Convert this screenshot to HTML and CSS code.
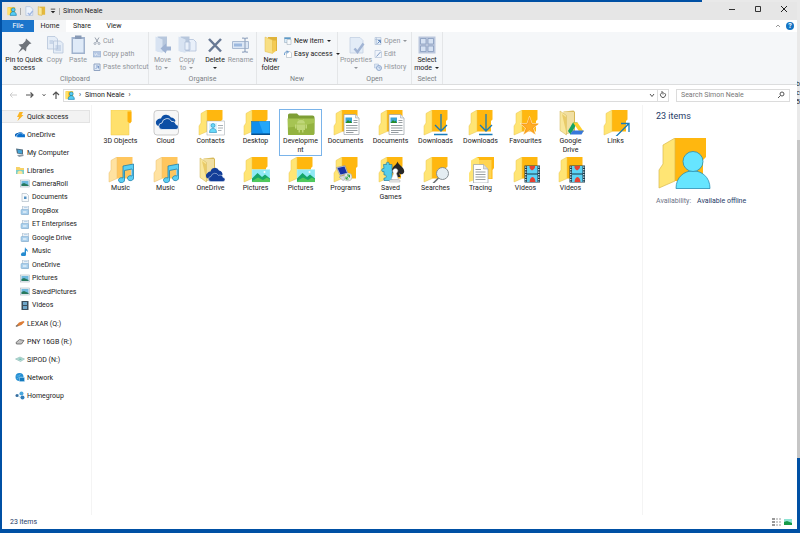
FILE: index.html
```html
<!DOCTYPE html>
<html lang="en">
<head>
<meta charset="utf-8">
<title>Simon Neale</title>
<link rel="stylesheet" href="styles.css">
</head>
<body>
<svg class="defs" aria-hidden="true">
  <symbol id="folder" viewBox="-4 0 56 52" overflow="visible">
    <path d="M16 0H47V19L44 22V43H16Z" fill="#ffb70f"/>
    <path d="M16 0L4 7V26L0 32V50L16 43Z" fill="#ffe574" stroke="#e8c54e" stroke-width="1"/>
  </symbol>
  <symbol id="f-3d" viewBox="-4 0 56 52">
    <path d="M4 0H44V24H40V50H4Z" fill="#ffe06c" stroke="#ecc84c"/>
    <path d="M37 3h8v20l-3 4-5-4z" fill="#ffb10a"/>
  </symbol>
  <symbol id="f-cloud" viewBox="-4 0 56 52">
    <rect x="0" y="1" width="49" height="49" rx="6" fill="#f7f7f7" stroke="#b9b9b9" stroke-width="1.5"/>
    <path d="M9 32a7 7 0 0 1-3-12 8 8 0 0 1 8-3 11 11 0 0 1 20-2 10 10 0 0 1 9 7l-10 10z" fill="#0d4fa5"/>
    <path d="M16 39a6 6 0 0 1 0-13 10 10 0 0 1 19-3 8 8 0 0 1 9 6 5 5 0 0 1 0 10z" fill="#0d4fa5" stroke="#fff" stroke-width="1.5"/>
  </symbol>
  <symbol id="f-contacts" viewBox="-4 0 56 52">
    <use href="#folder" x="-4" y="0" width="56" height="52"/>
    <rect x="16" y="22" width="35" height="28" fill="#fff" stroke="#9aa3aa"/>
    <rect x="20" y="26" width="16" height="20" fill="#d9f4ff"/>
    <circle cx="28" cy="31" r="4" fill="#66d9fa" stroke="#1679ac"/>
    <path d="M21 45c0-11 14-11 14 0z" fill="#66d9fa" stroke="#1679ac"/>
    <path d="M38 31h10M38 36h10M38 41h7" stroke="#8b959c" stroke-width="1.5"/>
  </symbol>
  <symbol id="f-desktop" viewBox="-4 0 56 52">
    <use href="#folder" x="-4" y="0" width="56" height="52"/>
    <rect x="15" y="23" width="37" height="26" fill="#108fee" stroke="#0869b4"/>
    <path d="M30 23h21v23H38z" fill="#24a7fa"/><path d="M15 47h37v3H15z" fill="#07508e"/>
  </symbol>
  <symbol id="f-dev" viewBox="-4 0 56 52">
    <path d="M-2 10q0-3 3-3h15l4 4h27q4 0 4 4v32q0 2-2 2H0q-2 0-2-2z" fill="#7e9e35"/>
    <path d="M-3 17h54l-1 31q0 2-2 2H0q-2 0-2-2z" fill="#a6c453"/>
    <path d="M-2 35q27-2 52-9v21q0 3-2 3H0q-2 0-2-3z" fill="#94b340"/>
    <g fill="#bfd678"><path d="M16 27a8 7 0 0 1 16 0zM16 29h16v11H16zM12 29h3v8h-3zM33 29h3v8h-3zM19 40h3v5h-3zM26 40h3v5h-3z"/><path d="M18 18l3 4M30 18l-3 4" stroke="#bfd678"/></g>
  </symbol>
  <symbol id="f-documents" viewBox="-4 0 56 52">
    <use href="#folder" x="-4" y="0" width="56" height="52"/>
    <path d="M20 9h23l7 7v33H20z" fill="#fff" stroke="#929ba0" stroke-width="1.3"/>
    <path d="M43 9v7h7" fill="#e7ebee" stroke="#929ba0"/>
    <rect x="23" y="15" width="13" height="11" fill="#3ba4d6"/><path d="M23 26l5-6 3 3 2-2 3 5z" fill="#268c28"/>
    <path d="M39 21h8M39 25h8M24 31h23M24 36h23M24 41h23M24 45h15" stroke="#838b90" stroke-width="1.7"/>
  </symbol>
  <symbol id="f-downloads" viewBox="-4 0 56 52">
    <use href="#folder" x="-4" y="0" width="56" height="52"/>
    <path d="M34 8v34M22 30l12 12 12-12M20 49h27" fill="none" stroke="#187bb9" stroke-width="2.6"/>
  </symbol>
  <symbol id="f-favourites" viewBox="-4 0 56 52">
    <use href="#folder" x="-4" y="0" width="56" height="52"/>
    <path d="M31 13l5 14h14L39 36l4 13-12-8-12 8 4-13-11-9h14z" fill="#ffad22" stroke="#fff1c5" stroke-width="1.6"/>
    <path d="M31 15l4 13h13L37 36l4 11-10-7-10 7 4-11-10-8h12z" fill="none" stroke="#f38712"/>
  </symbol>
  <symbol id="oldfolder" viewBox="-4 0 56 52">
    <path d="M10 3l19-2 3 3v38l-19 7z" fill="#d6b755"/>
    <path d="M8 3l22 1v36l-15 8z" fill="#f1dfa2"/>
    <path d="M2 2l13 9v39L2 41z" fill="#f8e69c" stroke="#ceb354"/><path d="M6 8l9 7v32z" fill="#e9cb69"/>
  </symbol>
  <symbol id="f-gdrive" viewBox="-4 0 56 52">
    <use href="#oldfolder" x="-4" y="0" width="56" height="52"/>
    <path d="M28 25h9l-14 24-5-7z" fill="#14a462"/><path d="M28 25h9l13 19h-9z" fill="#ffcf2b"/><path d="M28 41h22l-5 8H22z" fill="#3778db"/>
  </symbol>
  <symbol id="f-onedrive" viewBox="-4 0 56 52">
    <use href="#oldfolder" x="-4" y="0" width="56" height="52"/>
    <path d="M18 43a6 6 0 0 1-1-11 6 6 0 0 1 6-3 9 9 0 0 1 17-2 8 8 0 0 1 7 9l-12 8z" fill="#123d98"/>
    <path d="M24 49a5 5 0 0 1 0-10 8 8 0 0 1 15-2 6 6 0 0 1 9 4 4 4 0 0 1 0 8z" fill="#123d98" stroke="#d9e5f4"/>
  </symbol>
  <symbol id="f-links" viewBox="-4 0 56 52">
    <use href="#folder" x="-4" y="0" width="56" height="52"/>
    <path d="M24 53L50 27M34 27h16v17" fill="none" stroke="#187bb9" stroke-width="2.6"/>
  </symbol>
  <symbol id="f-music" viewBox="-4 0 56 52">
    <path d="M16 0H47V19L44 22V43H16Z" fill="#ffc65e"/>
    <path d="M16 0L4 7V26L0 32V50L16 43Z" fill="#ffe2a1" stroke="#e9bd68"/>
    <path d="M28 18l21-4v28a6 5 0 1 1-3-4V24l-15 3v19a6 5 0 1 1-3-4z" fill="#5bcff3" stroke="#187ba9" stroke-width="1.5"/>
  </symbol>
  <symbol id="f-pictures" viewBox="-4 0 56 52">
    <use href="#folder" x="-4" y="0" width="56" height="52"/>
    <rect x="16" y="25" width="36" height="25" fill="#8fe9f5" stroke="#c5f6f5"/>
    <path d="M16 43l11-11 9 8 6-5 10 8v7H16z" fill="#16a66a"/><path d="M16 48l12-7 10 5 8-5 6 4v5H16z" fill="#50c95c"/>
    <circle cx="41" cy="30" r="2" fill="#fff"/>
  </symbol>
  <symbol id="f-programs" viewBox="-4 0 56 52">
    <use href="#folder" x="-4" y="0" width="56" height="52"/>
    <path d="M5 21l17-4 6 16-16 4z" fill="#cbd2e5" stroke="#7b829a"/><path d="M7 22l14-3 5 13-13 3z" fill="#1932a5"/>
    <path d="M10 40l15-5 7 6-14 6z" fill="#d9dbe1" stroke="#8f939c"/><circle cx="28" cy="40" r="8" fill="#e6e9e8" stroke="#a1a9a3"/><path d="M24 44l7-8M26 36h5v5M24 39v5h5" fill="none" stroke="#31a33a" stroke-width="2"/>
  </symbol>
  <symbol id="f-games" viewBox="-4 0 56 52">
    <use href="#folder" x="-4" y="0" width="56" height="52"/>
    <path d="M9 15h6c-3-6 8-6 5 0h6v10c5-3 5 8 0 6v16H10v-5c6 2 6-8 0-6v-7c-6 3-6-8 0-6z" fill="#54cdea" stroke="#247ca0" stroke-width="1.4"/>
    <path d="M37 9c2 8 16 12 13 22-2 5-8 4-10 1l3 8H31l3-9c-4 3-10 0-8-6 2-7 9-9 11-16z" fill="#272727"/>
    <path d="M27 28c2-7 10-7 11 0l-3 5 4 12H24l5-12z" fill="#fff" stroke="#aaa"/><path d="M21 46h21v4H21z" fill="#eee" stroke="#aaa"/>
  </symbol>
  <symbol id="f-searches" viewBox="-4 0 56 52">
    <use href="#folder" x="-4" y="0" width="56" height="52"/>
    <path d="M29 42L17 54" stroke="#686e73" stroke-width="3"/><circle cx="37" cy="33" r="12" fill="#e4edf2" stroke="#868e93" stroke-width="2"/>
  </symbol>
  <symbol id="f-tracing" viewBox="-4 0 56 52">
    <path d="M16 0h34v22l-3 4v18H16z" fill="#ffb70f"/><path d="M20 6h25v37H20z" fill="#ffd452"/>
    <path d="M16 0L4 7v19l-4 6v18l20-7V3z" fill="#ffe574"/>
    <path d="M9 15h20l9 9v28H9z" fill="#fff" stroke="#929ba0" stroke-width="1.3"/><path d="M29 15v9h9" fill="#ddd" stroke="#929ba0"/>
    <path d="M13 25h11M13 30h20M13 35h20M13 40h20M13 45h20" stroke="#8d9498" stroke-width="1.8"/>
  </symbol>
  <symbol id="f-videos" viewBox="-4 0 56 52">
    <use href="#folder" x="-4" y="0" width="56" height="52"/>
    <path d="M21 17h31v34H21z" fill="#1d3a4a"/><path d="M26 18h21v15H26zM26 35h21v15H26z" fill="#5bd3f5"/>
    <path d="M31 18h11q1 5-6 9-6-4-5-9zM31 50q1-9 6-10 5 1 6 10z" fill="#e64232"/><path d="M23.500 19v31M49.500 19v31" stroke="#d9f3fb" stroke-width="2.5" stroke-dasharray="2.5 2.5"/>
  </symbol>
  <symbol id="user" viewBox="0 0 16 16">
    <path d="M1 2h12v12H1z" fill="#ffc61c"/><path d="M1 2l4 1v11l-4 1z" fill="#ffe06a"/>
    <circle cx="10" cy="6" r="3" fill="#56cdf5" stroke="#137cae"/><path d="M5 15c0-8 10-8 10 0z" fill="#56cdf5" stroke="#137cae"/>
  </symbol>
  <symbol id="n-pic" viewBox="0 0 20 18"><rect x="1" y="2" width="18" height="14" fill="#eef4f7" stroke="#98a7b1"/><path d="M3 4h14v10H3z" fill="#6fb9de"/><path d="M3 10l5-2 9 4v2H3z" fill="#28795d"/></symbol>
  <symbol id="n-lib" viewBox="0 0 20 18"><path d="M5 0h12v17H5z" fill="#eaf1f7" stroke="#94a8ba"/><path d="M8 3h7" stroke="#8db6dd"/><rect x="2" y="7" width="15" height="10" rx="1" fill="#a9cfec" stroke="#7aa6cb"/><path d="M6 12h7" stroke="#fff" stroke-width="2"/></symbol>
</svg>

<div class="behind" aria-hidden="true"><span>b</span><span>c</span><span>5</span></div>

<div class="window">
  <header class="titlebar">
    <svg class="i10" viewBox="0 0 16 16"><use href="#user"/></svg>
    <span class="bar"></span>
    <button aria-label="Properties"><svg class="i10" viewBox="0 0 16 16"><path d="M3 1h7l4 4v10H3z" fill="#edf3fc" stroke="#a9bbda"/><path d="M6 11l3 3 5-6" fill="none" stroke="#9fb6df" stroke-width="2"/></svg></button>
    <button aria-label="New folder"><svg class="i10" viewBox="0 0 16 16"><path d="M5 1h8v13H5z" fill="#e5b93d"/><path d="M2 1l6 2v12l-6-1z" fill="#fae696" stroke="#d8b144"/></svg></button>
    <button aria-label="Customise toolbar"><svg class="i6" viewBox="0 0 8 8"><path d="M1 1.500h6" stroke="#222"/><path d="M1 4h6l-3 3z" fill="#222"/></svg></button>
    <span class="bar"></span>
    <h1>Simon Neale</h1>
    <div class="controls">
      <button aria-label="Minimise"><svg class="i8" viewBox="0 0 8 8"><path d="M1 4.500h6" stroke="#333"/></svg></button>
      <button aria-label="Maximise"><svg class="i8" viewBox="0 0 8 8"><path d="M1.500 1.500h5v5h-5z" fill="none" stroke="#333"/></svg></button>
      <button aria-label="Close"><svg class="i8" viewBox="0 0 8 8"><path d="M1 1l6 6M7 1L1 7" stroke="#222"/></svg></button>
    </div>
  </header>

  <nav class="tabs" aria-label="Ribbon tabs">
    <button class="file">File</button><button class="active">Home</button><button>Share</button><button>View</button>
    <span class="grow"></span>
    <button class="mini" aria-label="Collapse ribbon"><svg class="i8" viewBox="0 0 8 8"><path d="M2 5l2-2 2 2" fill="none" stroke="#999"/></svg></button>
    <button class="help" aria-label="Help">?</button>
  </nav>

  <div class="ribbon">
    <section>
      <div class="tools">
        <button class="big w44"><svg viewBox="0 0 40 40"><path d="M24 7l11 10-4 1-6 7-1 8-6-5-10 8 7-11-6-6 8-1 6-6z" fill="#6f747b"/></svg><span>Pin to Quick<br>access</span></button>
        <button class="big w17 off"><svg viewBox="0 0 40 40"><path d="M5 3h15l5 5v20H5zM17 12h14l5 5v19H17z" fill="#e5edf7" stroke="#b1c1d8" stroke-width="1.5"/><path d="M21 22h11M21 26h11M21 30h11M9 12h7M9 16h7" stroke="#adc0db" stroke-width="2"/></svg><span>Copy</span></button>
        <button class="big w30 off"><svg viewBox="0 0 40 40"><path d="M7 4h27v34H7z" fill="#a0b2cd"/><path d="M10 8h21v27H10z" fill="#dfeaf8"/><path d="M14 1h13v7H14z" fill="#8799b5"/></svg><span>Paste</span></button>
        <div class="stack clip">
          <button class="off"><svg class="i8" viewBox="0 0 16 16"><path d="M4 1l6 10M12 1L6 11" stroke="#969eab" stroke-width="2"/><circle cx="4" cy="13" r="2" fill="none" stroke="#8e98a8" stroke-width="1.5"/><circle cx="12" cy="13" r="2" fill="none" stroke="#8e98a8" stroke-width="1.500"/></svg>Cut</button>
          <button class="off"><svg class="i8" viewBox="0 0 16 16"><path d="M0 3h16v11H0z" fill="#b5c7e3" stroke="#93a9ca"/><path d="M3 7l2 4 2-4 2 4M11 11h2" stroke="#fff" fill="none"/></svg>Copy path</button>
          <button class="off"><svg class="i8" viewBox="0 0 16 16"><path d="M2 2h12v13H2z" fill="#e1ebf8" stroke="#91a4c2" stroke-width="2"/><path d="M5 12l5-5M6 6h5v5" fill="none" stroke="#6385bc" stroke-width="1.5"/></svg>Paste shortcut</button>
        </div>
      </div>
      <h2>Clipboard</h2>
    </section>
    <section>
      <div class="tools">
        <button class="big w27 off"><svg viewBox="0 0 40 40"><path d="M9 3h19v30H9z" fill="#b7c7dd"/><path d="M5 3l14 6v27L5 32z" fill="#d8e3f2"/><path d="M36 23H26v-6L15 27l11 10v-6h10z" fill="#9fb3d3"/></svg><span>Move<br>to <i class="arrow"></i></span></button>
        <button class="big w22 off"><svg viewBox="0 0 40 40"><path d="M7 3h18v30H7z" fill="#b7c7dd"/><path d="M3 3l14 6v27L3 32z" fill="#d8e3f2"/><path d="M16 14h10v16H16zM24 9h9l5 5v18H24z" fill="#e9f0fa" stroke="#adbdd7" stroke-width="1.5"/></svg><span>Copy<br>to <i class="arrow"></i></span></button>
        <button class="big w34"><svg viewBox="0 0 40 40"><path d="M8 8l24 25M32 8L8 33" stroke="#687995" stroke-width="5"/></svg><span>Delete<br><i class="arrow"></i></span></button>
        <button class="big w17 off"><svg viewBox="0 0 40 40"><path d="M3 13h32v14H3z" fill="#dce7f5" stroke="#a9bad2" stroke-width="2"/><path d="M6 17h16v6H6z" fill="#9db9df"/><path d="M22 6h4l2 2 2-2h4M28 8v24M22 34h4l2-2 2 2h4" fill="none" stroke="#9aabc4" stroke-width="2.500"/></svg><span>Rename</span></button>
        <span class="pad"></span>
      </div>
      <h2>Organise</h2>
    </section>
    <section>
      <div class="tools">
        <button class="big w27"><svg viewBox="0 0 40 40"><path d="M14 4h18v28H14z" fill="#dfb33b"/><path d="M8 4l15 6v27L8 33z" fill="#f8df84" stroke="#e0bb4d"/><path d="M23 11h7v21l-7 5z" fill="#f4cb54"/></svg><span>New<br>folder</span></button>
        <div class="stack new">
          <button><svg class="i8" viewBox="0 0 16 16"><path d="M1 1h12v10H1z" fill="#d9ebf8" stroke="#8ca5b9"/><path d="M1 1h12v3H1z" fill="#5d9bc9"/><path d="M6 5h8v10H6z" fill="#f7fafc" stroke="#9aa7b3"/></svg>New item <i class="arrow"></i></button>
          <button><svg class="i8" viewBox="0 0 16 16"><path d="M5 3h7l3 3v9H5z" fill="#fff" stroke="#9aa7b3"/><path d="M1 10C1 4 3 3 8 4M6 1l3 3-3 3" fill="none" stroke="#387ec3" stroke-width="1.500"/></svg>Easy access <i class="arrow"></i></button>
        </div>
      </div>
      <h2>New</h2>
    </section>
    <section>
      <div class="tools">
        <button class="big w36 off"><svg viewBox="0 0 40 40"><path d="M8 5h20l6 6v25H8z" fill="#e3ecf7" stroke="#c0cee1" stroke-width="1.5"/><path d="M17 27l6 7 12-17" fill="none" stroke="#a1b4d4" stroke-width="5"/></svg><span>Properties<br><i class="arrow"></i></span></button>
        <div class="stack open">
          <button class="off"><svg class="i8" viewBox="0 0 16 16"><path d="M2 1h12v14H2z" fill="#e4edf7" stroke="#9eb2cf"/><path d="M2 5h12M5 1v14" stroke="#9eb2cf"/><path d="M7 13l6-6M8 7h5v5" fill="none" stroke="#668bc0" stroke-width="2"/></svg>Open <i class="arrow"></i></button>
          <button class="off"><svg class="i8" viewBox="0 0 16 16"><path d="M2 1h11l2 3v11H2z" fill="#eff4fb" stroke="#9eb2cf"/><path d="M5 13l8-9" stroke="#809bc1" stroke-width="2"/></svg>Edit</button>
          <button class="off"><svg class="i8" viewBox="0 0 16 16"><path d="M1 2h8v8H1z" fill="#d9e5f4" stroke="#a0b4d1"/><circle cx="10" cy="10" r="5" fill="#dbe7f6" stroke="#7896c3" stroke-width="1.500"/><path d="M10 7v3h3" fill="none" stroke="#6688bd"/></svg>History</button>
        </div>
      </div>
      <h2>Open</h2>
    </section>
    <section>
      <div class="tools">
        <button class="big w30"><svg viewBox="0 0 40 40"><path d="M3 3h34v34H3z" fill="#bac6dc"/><path d="M7 7h11v11H7zM22 7h11v11H22zM7 22h11v11H7zM22 22h11v11H22z" fill="#d5e1f2" stroke="#8398bb" stroke-width="1.5"/></svg><span>Select<br>mode <i class="arrow"></i></span></button>
      </div>
      <h2>Select</h2>
    </section>
  </div>

  <div class="addressbar">
    <button class="go" aria-label="Back"><svg class="i10" viewBox="0 0 10 10"><path d="M9 5H2M4.500 2.500L2 5l2.500 2.500" fill="none" stroke="#ccc"/></svg></button>
    <button class="go" aria-label="Forward"><svg class="i10" viewBox="0 0 10 10"><path d="M1 5h7M5.500 2.500L8 5 5.500 7.500" fill="none" stroke="#555" stroke-width="1.200"/></svg></button>
    <button class="go small" aria-label="Recent locations"><svg class="i8" viewBox="0 0 8 8"><path d="M2.500 3l1.500 2 1.500-2" fill="none" stroke="#777"/></svg></button>
    <button class="go small" aria-label="Up"><svg class="i10" viewBox="0 0 10 10"><path d="M5 9V2M2 5l3-3 3 3" fill="none" stroke="#555" stroke-width="1.200"/></svg></button>
    <div class="path">
      <svg class="i10" viewBox="0 0 16 16"><use href="#user"/></svg>
      <span class="chev">›</span><a href="#">Simon Neale</a><span class="chev">›</span>
      <span class="grow"></span>
      <button aria-label="Previous locations"><svg class="i8" viewBox="0 0 8 8"><path d="M2 3l2 2.500L6 3" fill="none" stroke="#555"/></svg></button>
      <button class="refresh" aria-label="Refresh"><svg class="i8" viewBox="0 0 8 8"><path d="M5.500 2A2.500 2.500 0 1 1 2.500 2M2 1h2v2.500" fill="none" stroke="#555"/></svg></button>
    </div>
    <label class="search"><input type="search" placeholder="Search Simon Neale" aria-label="Search Simon Neale"><svg class="i8" viewBox="0 0 8 8"><circle cx="5" cy="3" r="2" fill="none" stroke="#555"/><path d="M3.500 4.500L1 7" stroke="#555"/></svg></label>
  </div>

  <main class="body">
    <nav class="tree" aria-label="Folders">
      <a class="current" href="#"><svg viewBox="0 0 20 18"><path d="M9 0h7l-3 6h4L5 18l3-8H4z" fill="#fbb423"/></svg>Quick access</a>
      <a href="#"><svg viewBox="0 0 20 18"><path d="M1 13a4 4 0 0 1 1-6 4 4 0 0 1 4-1 6 6 0 0 1 10 1l-8 7z" fill="#0a62b8"/><path d="M6 15a3 3 0 0 1 0-6 5 5 0 0 1 9-1 4 4 0 0 1 4 7z" fill="#0a70cd" stroke="#fff"/></svg>OneDrive</a>
      <a href="#"><svg viewBox="0 0 20 18"><path d="M2 1l14 2v10L4 11z" fill="#536c7e"/><path d="M5 3l9 2v6l-8-1z" fill="#43a5d8"/><path d="M4 14l13-1v3l-9 2z" fill="#8c9aa6"/></svg>My Computer</a>
      <a href="#"><svg viewBox="0 0 20 18"><path d="M2 2h7l2 2h7v12H2z" fill="#f6d267"/><path d="M2 8h16v8H2z" fill="#7ed0c8"/><path d="M5 12q5-5 10 0v4H5z" fill="#fae69b"/></svg>Libraries</a>
      <div class="children">
        <a href="#"><svg viewBox="0 0 20 18"><use href="#n-pic"/></svg>CameraRoll</a>
        <a href="#"><svg viewBox="0 0 20 18"><path d="M4 1h9l4 4v12H4z" fill="#f7fafc" stroke="#97a6b2"/><path d="M8 7h5v5H8z" fill="#5592c3"/></svg>Documents</a>
        <a href="#"><svg viewBox="0 0 20 18"><use href="#n-lib"/></svg>DropBox</a>
        <a href="#"><svg viewBox="0 0 20 18"><use href="#n-lib"/></svg>ET Enterprises</a>
        <a href="#"><svg viewBox="0 0 20 18"><use href="#n-lib"/></svg>Google Drive</a>
        <a href="#"><svg viewBox="0 0 20 18"><path d="M10 0c1 5 7 4 5 10-1-3-3-3-3-3v8a5 4 0 1 1-3-4z" fill="#258bd0"/></svg>Music</a>
        <a href="#"><svg viewBox="0 0 20 18"><use href="#n-lib"/></svg>OneDrive</a>
        <a href="#"><svg viewBox="0 0 20 18"><use href="#n-pic"/></svg>Pictures</a>
        <a href="#"><svg viewBox="0 0 20 18"><use href="#n-pic"/></svg>SavedPictures</a>
        <a href="#"><svg viewBox="0 0 20 18"><path d="M3 0h14v18H3z" fill="#3b4d5b"/><path d="M6 2h8v6H6zM6 10h8v6H6z" fill="#6ea6c9"/></svg>Videos</a>
      </div>
      <a href="#"><svg viewBox="0 0 20 18"><path d="M2 14l6-7 9-3 2 2-6 6-8 3z" fill="#dc7c36"/><path d="M1 14l4-3 2 2-4 3z" fill="#777"/></svg>LEXAR (Q:)</a>
      <a href="#"><svg viewBox="0 0 20 18"><path d="M2 11l7-6 9 2-5 7-10 0z" fill="#c5c5c5" stroke="#555" stroke-width="1.500"/></svg>PNY 16GB (R:)</a>
      <a href="#"><svg viewBox="0 0 20 18"><path d="M1 8l9-4 9 4-8 5z" fill="#b8ded8" stroke="#7daea8"/><path d="M6 8l4-1 4 1-3 2z" fill="#6ab9a9"/></svg>SIPOD (N:)</a>
      <a href="#"><svg viewBox="0 0 20 18"><circle cx="9" cy="8" r="8" fill="#238dd2"/><path d="M3 6q6 2 8-4M3 12q7-6 12-4" stroke="#8bd2f6" fill="none"/><path d="M9 9h10v8H9z" fill="#1479bd" stroke="#b9dff5"/></svg>Network</a>
      <a href="#"><svg viewBox="0 0 20 18"><path d="M4 9l9-5M4 9l10 5" stroke="#79b9df"/><circle cx="4" cy="9" r="3" fill="#356d9f"/><circle cx="13" cy="5" r="4" fill="#49a7df"/><circle cx="15" cy="13" r="4" fill="#307db9"/></svg>Homegroup</a>
    </nav>

    <div class="files">
      <a href="#"><svg><use href="#f-3d"/></svg>3D Objects</a>
      <a href="#"><svg><use href="#f-cloud"/></svg>Cloud</a>
      <a href="#"><svg><use href="#f-contacts"/></svg>Contacts</a>
      <a href="#"><svg><use href="#f-desktop"/></svg>Desktop</a>
      <a class="selected" href="#"><svg><use href="#f-dev"/></svg>Developme<br>nt</a>
      <a href="#"><svg><use href="#f-documents"/></svg>Documents</a>
      <a href="#"><svg><use href="#f-documents"/></svg>Documents</a>
      <a href="#"><svg><use href="#f-downloads"/></svg>Downloads</a>
      <a href="#"><svg><use href="#f-downloads"/></svg>Downloads</a>
      <a href="#"><svg><use href="#f-favourites"/></svg>Favourites</a>
      <a href="#"><svg><use href="#f-gdrive"/></svg>Google<br>Drive</a>
      <a href="#"><svg><use href="#f-links"/></svg>Links</a>
      <a href="#"><svg><use href="#f-music"/></svg>Music</a>
      <a href="#"><svg><use href="#f-music"/></svg>Music</a>
      <a href="#"><svg><use href="#f-onedrive"/></svg>OneDrive</a>
      <a href="#"><svg><use href="#f-pictures"/></svg>Pictures</a>
      <a href="#"><svg><use href="#f-pictures"/></svg>Pictures</a>
      <a href="#"><svg><use href="#f-programs"/></svg>Programs</a>
      <a href="#"><svg><use href="#f-games"/></svg>Saved<br>Games</a>
      <a href="#"><svg><use href="#f-searches"/></svg>Searches</a>
      <a href="#"><svg><use href="#f-tracing"/></svg>Tracing</a>
      <a href="#"><svg><use href="#f-videos"/></svg>Videos</a>
      <a href="#"><svg><use href="#f-videos"/></svg>Videos</a>
    </div>

    <aside class="details">
      <h2>23 items</h2>
      <svg viewBox="-4 0 56 52"><path d="M16 0H47V19L44 22V43H16Z" fill="#ffb70f"/><path d="M16 0L4 7V26L0 32V50L16 43Z" fill="#ffe574" stroke="#d8b94e" stroke-width=".7"/><path d="M17 50.500C17 27 51 27 51 50.500Z" fill="#66e5ff" stroke="#278eb5" stroke-width=".8"/><circle cx="34" cy="23.500" r="10" fill="#66e5ff" stroke="#278eb5" stroke-width=".8"/></svg>
      <dl><dt>Availability:</dt><dd>Available offline</dd></dl>
    </aside>
  </main>

  <footer class="status">
    <span>23 items</span>
    <span class="grow"></span>
    <button aria-label="Details view"><svg class="i10" viewBox="0 0 10 10"><path d="M1 2h3M1 5h3M1 8h3" stroke="#999" stroke-width="2"/><path d="M5 2h2M8 2h2M5 5h2M8 5h2M5 8h2M8 8h2" stroke="#999"/></svg></button>
    <button aria-label="Large icons view"><svg class="i10" viewBox="0 0 10 10"><path d="M1 2h8v6H1z" fill="#8ce3d3"/><path d="M1 5l3-1 5 2v2H1z" fill="#169a48"/></svg></button>
  </footer>
</div>
</body>
</html>
```
FILE: styles.css
```css
* { box-sizing: border-box; }

body {
  margin: 0;
  height: 100vh;
  padding: 2px 3px 4px 2px;
  background: #0050a4;
  color: #222;
  font: 7px/8px Roboto, "Open Sans", sans-serif;
  overflow: hidden;
}

h1, h2, dl, dd { margin: 0; font: inherit; }
a { color: inherit; text-decoration: none; }
button { padding: 0; border: 0; background: none; color: inherit; font: inherit; }
svg { display: block; flex: none; }

.defs { position: absolute; width: 0; height: 0; }
.grow { flex: 1; }
.i6 { width: 6px; height: 6px; }
.i8 { width: 8px; height: 8px; }
.i10 { width: 10px; height: 10px; }

/* Sliver of another window showing past the right edge */
.behind {
  position: absolute;
  top: 0;
  right: 0;
  bottom: 75px;
  left: 702px;
  display: flex;
  flex-direction: column;
  align-items: flex-end;
  padding-top: 80px;
  overflow: hidden;
  background: linear-gradient(#e9e9e9 140px, #c6c6c6 140px);
  line-height: 9px;
}

.window {
  position: relative;
  display: flex;
  flex-direction: column;
  height: 100%;
  background: #fff;
}

.titlebar {
  display: flex;
  align-items: center;
  gap: 3px;
  height: 18px;
  padding-left: 5px;
  background: #e6e6e6;
}
.titlebar .bar { width: 1px; height: 7px; background: #aaa; }
.controls { display: flex; align-self: flex-start; margin-left: auto; }
.controls button { display: grid; place-items: center; width: 26px; height: 14px; }

.tabs { display: flex; align-items: center; height: 12px; }
.tabs button { width: 32px; height: 12px; }
.tabs .file { background: #1b75cb; color: #fff; }
.tabs .active { background: #f5f6f7; }
.tabs .mini { display: grid; place-items: center; width: 14px; }
.tabs .help { width: 8px; height: 8px; margin: 0 3px 0 1px; border-radius: 50%; background: #1374c4; color: #fff; font-weight: bold; }

.ribbon { display: flex; height: 53px; border-bottom: 1px solid #dcddde; background: #f5f7f9; }
.ribbon section { display: flex; flex-direction: column; padding: 3px 0 1px; border-right: 1px solid #e4e6e8; }
.ribbon h2 { margin-top: auto; color: #7b7f84; text-align: center; }
.tools { display: flex; }
.big { display: flex; flex-direction: column; align-items: center; gap: 1px; height: 38px; white-space: nowrap; }
.big svg { width: 20px; height: 20px; }
.w17 { width: 17px; }
.w22 { width: 22px; }
.w27 { width: 27px; }
.w30 { width: 30px; }
.w34 { width: 34px; }
.w36 { width: 36px; }
.w44 { width: 44px; }
.pad { width: 7px; }
.stack { display: flex; flex-direction: column; gap: 5px; padding-top: 2px; }
.stack.clip { width: 55px; }
.stack.new { width: 53px; }
.stack.open { width: 37px; }
.stack button { display: flex; align-items: center; gap: 2px; height: 8px; white-space: nowrap; }
.off { color: #92969b; }
.arrow {
  display: inline-block;
  margin: 0 1px;
  border: 2px solid transparent;
  border-top-color: currentColor;
  border-bottom: 0;
  vertical-align: middle;
}

.addressbar { display: flex; align-items: center; height: 20px; padding-right: 7px; }
.go { display: grid; place-items: center; width: 17px; }
.go:first-child { margin-left: 2px; }
.go.small { width: 12px; }
.path {
  display: flex;
  flex: 1;
  align-items: center;
  height: 13px;
  margin: 0 7px 0 1px;
  padding-left: 1px;
  border: 1px solid #dcdcdc;
}
.path .chev { width: 10px; text-align: center; }
.path button { display: grid; place-items: center; width: 10px; height: 11px; }
.path .refresh { width: 11px; border-left: 1px solid #ddd; }
.search { display: flex; align-items: center; width: 114px; height: 13px; padding: 0 4px; border: 1px solid #dcdcdc; }
.search input { flex: 1; width: 0; padding: 0; border: 0; outline: 0; background: none; color: #333; font: inherit; }
.search input::placeholder { color: #777; }

.body { display: flex; flex: 1; min-height: 0; }
.tree { display: flex; flex-direction: column; gap: 5px; width: 90px; padding: 5px 1px 0 0; border-right: 1px solid #f4f4f4; }
.tree a { display: flex; align-items: center; gap: 2px; height: 13px; padding-left: 13px; white-space: nowrap; }
.tree svg { width: 10px; height: 9px; }
.tree .current { border: 1px solid #e3e3e3; border-left: 0; background: #f2f2f2; }
.children { display: grid; grid-template-rows: repeat(10, 1fr); height: 135px; margin-top: -5px; }
.children a { height: auto; padding-left: 18px; }

.files {
  display: grid;
  flex: 1;
  grid-template-columns: repeat(auto-fill, 45px);
  align-content: start;
  padding: 4px 0 0 6px;
}
.files a {
  display: block;
  height: 47px;
  margin: 0 1px;
  border: 1px solid transparent;
  line-height: 9px;
  text-align: center;
  white-space: nowrap;
}
.files svg { width: 28px; height: 26px; margin: 0 auto 1px; overflow: visible; }
.files .selected { border-color: #7ab4ea; }

.details { width: 155px; padding: 6px 0 0 13px; border-left: 1px solid #f4f4f4; color: #1e3a66; }
.details h2 { font-size: 9px; line-height: 11px; }
.details svg { width: 56px; height: 52px; margin: 16px 0 7px -1px; }
.details dl { display: flex; gap: 6px; }
.details dt { color: #6c7487; }

.status { display: flex; align-items: center; gap: 2px; height: 14px; padding: 0 4px 0 8px; color: #1e3a66; }
```
